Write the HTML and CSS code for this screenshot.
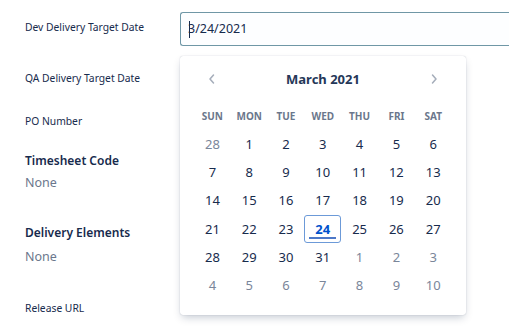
FILE: index.html
```html
<!DOCTYPE html>
<html>
<head>
<meta charset="utf-8">
<link rel="stylesheet" href="styles.css">
</head>
<body>
<div class="page">
  <div class="labels">
    <div class="row small r1">Dev Delivery Target Date</div>
    <div class="row small r2">QA Delivery Target Date</div>
    <div class="row small r3">PO Number</div>
    <div class="row head r4">Timesheet Code</div>
    <div class="row none r5">None</div>
    <div class="row head r6">Delivery Elements</div>
    <div class="row none r7">None</div>
    <div class="row small r8">Release URL</div>
  </div>
  <div class="field">
    <div class="input"><span class="caret"></span>3/24/2021</div>
    <div class="popup">
      <div class="cal-head">
        <svg class="chev" width="10" height="12" viewBox="0 0 10 12"><path d="M6.5 2 L3 6 L6.5 10" fill="none" stroke="#a5adba" stroke-width="1.5" stroke-linecap="round" stroke-linejoin="round"/></svg>
        <div class="month">March 2021</div>
        <svg class="chev" width="10" height="12" viewBox="0 0 10 12"><path d="M3.5 2 L7 6 L3.5 10" fill="none" stroke="#a5adba" stroke-width="1.5" stroke-linecap="round" stroke-linejoin="round"/></svg>
      </div>
      <div class="grid">
        <div class="dow">SUN</div><div class="dow">MON</div><div class="dow">TUE</div><div class="dow">WED</div><div class="dow">THU</div><div class="dow">FRI</div><div class="dow">SAT</div>
        <div class="d other">28</div><div class="d">1</div><div class="d">2</div><div class="d">3</div><div class="d">4</div><div class="d">5</div><div class="d">6</div>
        <div class="d">7</div><div class="d">8</div><div class="d">9</div><div class="d">10</div><div class="d">11</div><div class="d">12</div><div class="d">13</div>
        <div class="d">14</div><div class="d">15</div><div class="d">16</div><div class="d">17</div><div class="d">18</div><div class="d">19</div><div class="d">20</div>
        <div class="d">21</div><div class="d">22</div><div class="d">23</div><div class="d sel">24</div><div class="d">25</div><div class="d">26</div><div class="d">27</div>
        <div class="d">28</div><div class="d">29</div><div class="d">30</div><div class="d">31</div><div class="d other">1</div><div class="d other">2</div><div class="d other">3</div>
        <div class="d other">4</div><div class="d other">5</div><div class="d other">6</div><div class="d other">7</div><div class="d other">8</div><div class="d other">9</div><div class="d other">10</div>
      </div>
    </div>
  </div>
</div>
</body>
</html>
```
FILE: styles.css
```css
html, body {
  margin: 0;
  padding: 0;
  background: #ffffff;
}
body {
  font-family: "Noto Sans", "Open Sans", "DejaVu Sans", sans-serif;
  color: #172b4d;
  width: 509px;
  height: 334px;
  overflow: hidden;
}
.page {
  display: flex;
  height: 334px;
}
.labels {
  width: 180px;
  flex: none;
  padding-left: 25px;
  box-sizing: border-box;
  display: flex;
  flex-direction: column;
}
.row {
  white-space: nowrap;
}
.small {
  font-size: 10.3px;
  line-height: 16px;
  color: #172b4d;
}
.head {
  font-size: 12px;
  line-height: 18px;
  font-weight: 600;
  color: #172b4d;
}
.none {
  font-size: 12.5px;
  line-height: 18px;
  color: #6b778c;
}
.r1 { margin-top: 19px; }
.r2 { margin-top: 35px; }
.r3 { margin-top: 27px; }
.r4 { margin-top: 23px; }
.r5 { margin-top: 4px; }
.r6 { margin-top: 32px; }
.r7 { margin-top: 6px; }
.r8 { margin-top: 34px; }

.field {
  position: relative;
  flex: 1;
  padding-top: 12px;
}
.input {
  height: 34px;
  box-sizing: border-box;
  border: 1px solid #6f97a6;
  border-right: none;
  border-radius: 3px 0 0 3px;
  background: #fdfeff;
  font-size: 12.5px;
  line-height: 32px;
  padding-left: 7px;
  color: #172b4d;
  position: relative;
}
.caret {
  position: absolute;
  left: 8px;
  top: 8px;
  width: 1px;
  height: 17px;
  background: #172b4d;
}
.popup {
  position: absolute;
  left: 0;
  top: 56px;
  width: 286px;
  height: 259px;
  background: #fff;
  border-radius: 3px;
  box-shadow: 0 4px 8px -2px rgba(9, 30, 66, 0.25), 0 0 1px rgba(9, 30, 66, 0.31);
  box-sizing: border-box;
  padding: 12px 14px 0 14px;
}
.cal-head {
  display: flex;
  align-items: center;
  justify-content: space-between;
  height: 22px;
  padding: 0 13px 0 13px;
}
.month {
  font-size: 13px;
  font-weight: 700;
  color: #253858;
}
.grid {
  display: grid;
  grid-template-columns: repeat(7, 36.8px);
  grid-template-rows: 22px;
  grid-auto-rows: 28.2px;
  margin-top: 18px;
}
.dow {
  font-size: 10px;
  font-weight: 700;
  color: #6b778c;
  text-align: center;
  line-height: 16px;
  align-self: start;
}
.d {
  font-size: 13px;
  color: #172b4d;
  text-align: center;
  line-height: 28px;
  position: relative;
}
.d.other {
  color: #7a869a;
}
.d.sel {
  color: #0052cc;
  font-weight: 700;
  border: 1px solid #6c9ad8;
  border-radius: 3px;
  box-sizing: border-box;
  line-height: 26px;
}
.d.sel::after {
  content: "";
  position: absolute;
  left: 4px;
  right: 4px;
  bottom: 3px;
  height: 2px;
  background: #4c78c8;
}
```
